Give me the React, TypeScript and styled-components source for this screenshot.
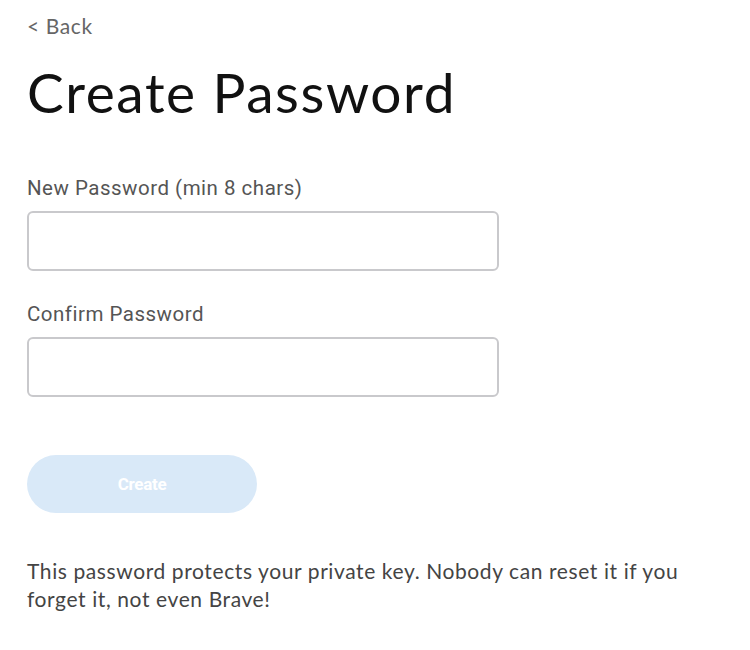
import React from 'react';
import styled, { createGlobalStyle } from 'styled-components';

const GlobalStyle = createGlobalStyle`
  html, body {
    margin: 0;
    padding: 0;
    background: #ffffff;
  }
  * {
    box-sizing: border-box;
  }
`;

const Page = styled.div`
  display: flex;
  flex-direction: column;
  padding: 13px 27px 0;
  font-family: 'Lato', 'Open Sans', sans-serif;
`;

const BackLink = styled.a`
  font-size: 21px;
  line-height: 26px;
  letter-spacing: 0.6px;
  color: #666666;
  text-decoration: none;
  cursor: pointer;
`;

const Title = styled.h1`
  margin: 21px 0 0;
  font-family: 'Lato', sans-serif;
  font-weight: 400;
  font-size: 55px;
  line-height: 64px;
  color: #111111;
  letter-spacing: 1.6px;
`;

const Form = styled.form`
  display: flex;
  flex-direction: column;
  margin-top: 51px;
  width: 472px;
`;

const Field = styled.div`
  display: flex;
  flex-direction: column;
  gap: 10px;
  margin-bottom: 30px;
`;

const Label = styled.label`
  font-family: 'Roboto', sans-serif;
  font-size: 20.5px;
  line-height: 26px;
  letter-spacing: 0.5px;
  color: #555555;
`;

const Input = styled.input`
  height: 60px;
  width: 100%;
  border: 2px solid #c9c9cc;
  border-radius: 6px;
  padding: 0 14px;
  font-size: 18px;
  outline: none;
  background: #fff;
`;

const CreateButton = styled.button`
  margin-top: 28px;
  width: 230px;
  height: 58px;
  border: none;
  border-radius: 29px;
  background: #d9e9f8;
  color: #ffffff;
  font-family: 'Roboto', sans-serif;
  font-weight: 700;
  font-size: 17px;
  letter-spacing: -0.3px;
  cursor: default;
`;

const Note = styled.p`
  margin: 44px 0 0;
  max-width: 680px;
  font-size: 21px;
  line-height: 28px;
  letter-spacing: 0.6px;
  color: #444444;
`;

export default function App() {
  return (
    <>
      <GlobalStyle />
      <Page>
        <BackLink>&lt; Back</BackLink>
        <Title>Create Password</Title>
        <Form onSubmit={e => e.preventDefault()}>
          <Field>
            <Label>New Password (min 8 chars)</Label>
            <Input type="password" />
          </Field>
          <Field>
            <Label>Confirm Password</Label>
            <Input type="password" />
          </Field>
          <CreateButton type="button" disabled>Create</CreateButton>
        </Form>
        <Note>
          This password protects your private key. Nobody can reset it if you forget it, not even Brave!
        </Note>
      </Page>
    </>
  );
}
